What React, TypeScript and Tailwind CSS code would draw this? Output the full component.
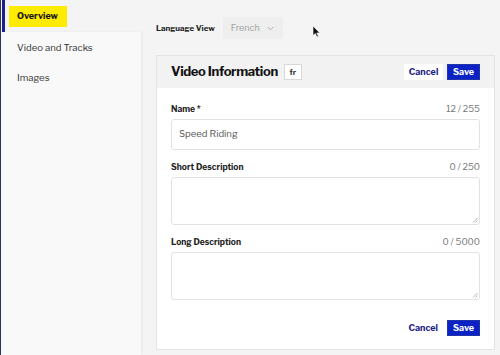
import React from "react";

const font = { fontFamily: '"Libre Franklin", "Liberation Sans", Arial, sans-serif' };

function Field({ label, count, value, area }: { label: string; count: string; value?: string; area?: boolean }) {
  return (
    <div className="flex flex-col">
      <div className="flex items-center justify-between h-[14px]">
        <span className="text-[8.5px] font-bold text-[#222]">{label}</span>
        <span className="text-[9px] text-[#777]">{count}</span>
      </div>
      {area ? (
        <div className="relative mt-[3px] h-[48px] rounded-[3px] border border-[#e2e2e2] bg-white">
          <svg className="absolute right-[1px] bottom-[1px]" width="6" height="6" viewBox="0 0 6 6">
            <path d="M5.5 1 L1 5.5 M5.5 3.5 L3.5 5.5" stroke="#999" strokeWidth="0.7" />
          </svg>
        </div>
      ) : (
        <div className="mt-[3px] h-[31px] rounded-[3px] border border-[#e2e2e2] bg-white flex items-center px-[7px]">
          <span className="text-[9.5px] text-[#555]">{value}</span>
        </div>
      )}
    </div>
  );
}

export default function App() {
  return (
    <div className="w-[500px] h-[355px] overflow-hidden bg-[#f4f4f4] flex relative" style={font}>
      {/* Sidebar */}
      <div className="w-[141px] h-full flex border-l border-[#2c3852]">
        <div className="w-full flex flex-col">
          <div className="h-[32px] flex items-center">
            <div className="w-[1px] h-full" />
            <div className="w-[3px] h-full bg-[#1b1f8f]" />
            <div className="ml-[4px] h-[21px] w-[58px] bg-[#ffeb00] flex items-center pl-[8px]">
              <span className="text-[9px] font-bold text-[#111]">Overview</span>
            </div>
          </div>
          <div className="flex-1 ml-[1px] bg-[#f9f9f9] shadow-[1px_0_2px_rgba(0,0,0,0.06)] flex flex-col pt-[9px] pl-[15px] gap-[17px]">
            <span className="text-[9.5px] text-[#333] leading-[13px]">Video and Tracks</span>
            <span className="text-[9.5px] text-[#333] leading-[13px]">Images</span>
          </div>
        </div>
      </div>

      {/* Main */}
      <div className="flex-1 flex flex-col pl-[15px] pr-[5px] pt-[17px]">
        <div className="flex items-start h-[22px]">
          <span className="text-[8px] font-bold text-[#222] leading-[22px]">Language View</span>
          <div className="ml-[8px] h-[22px] w-[60px] bg-[#eeeeee] flex items-center pl-[8px] gap-[7px]">
            <span className="text-[9px] text-[#a0a0a0]">French</span>
            <svg width="7" height="5" viewBox="0 0 7 5">
              <path d="M0.8 1 L3.5 3.8 L6.2 1" stroke="#aaa" strokeWidth="0.9" fill="none" />
            </svg>
          </div>
          <svg className="ml-[29px] mt-[8px]" width="9" height="13" viewBox="0 0 9 13">
            <path d="M1 1 L1 10.5 L3.3 8.5 L5 12 L6.4 11.3 L4.8 7.9 L7.8 7.9 Z" fill="#111" stroke="#fff" strokeWidth="0.6" />
          </svg>
        </div>

        <div className="mt-[16px] flex-1 mb-[5px] border border-[#e4e4e4] bg-white flex flex-col">
          <div className="h-[32px] bg-[#f2f2f2] flex items-center pl-[14px] pr-[14px]">
            <span className="text-[13px] font-bold tracking-[-0.35px] text-[#111]">Video Information</span>
            <span className="ml-[6px] h-[16px] w-[18px] border border-[#d8d8d8] bg-white flex items-center justify-center text-[8px] font-bold text-[#333]">fr</span>
            <div className="ml-auto flex items-center gap-[4px]">
              <span className="h-[16px] w-[39px] bg-white flex items-center justify-center text-[9px] font-bold text-[#1c2383]">Cancel</span>
              <span className="h-[16px] w-[33px] bg-[#0b22c4] border border-[#2233aa] flex items-center justify-center text-[9px] font-bold text-white">Save</span>
            </div>
          </div>
          <div className="flex flex-col px-[14px] pt-[14px] gap-[10px]">
            <Field label="Name *" count="12 / 255" value="Speed Riding" />
            <Field label="Short Description" count="0 / 250" area />
            <Field label="Long Description" count="0 / 5000" area />
          </div>
          <div className="flex justify-end items-center gap-[9px] pr-[14px] mt-[20px]">
            <span className="text-[9px] font-bold text-[#1c2383]">Cancel</span>
            <span className="h-[16px] w-[33px] bg-[#0b22c4] border border-[#2233aa] flex items-center justify-center text-[9px] font-bold text-white">Save</span>
          </div>
        </div>
      </div>
    </div>
  );
}
